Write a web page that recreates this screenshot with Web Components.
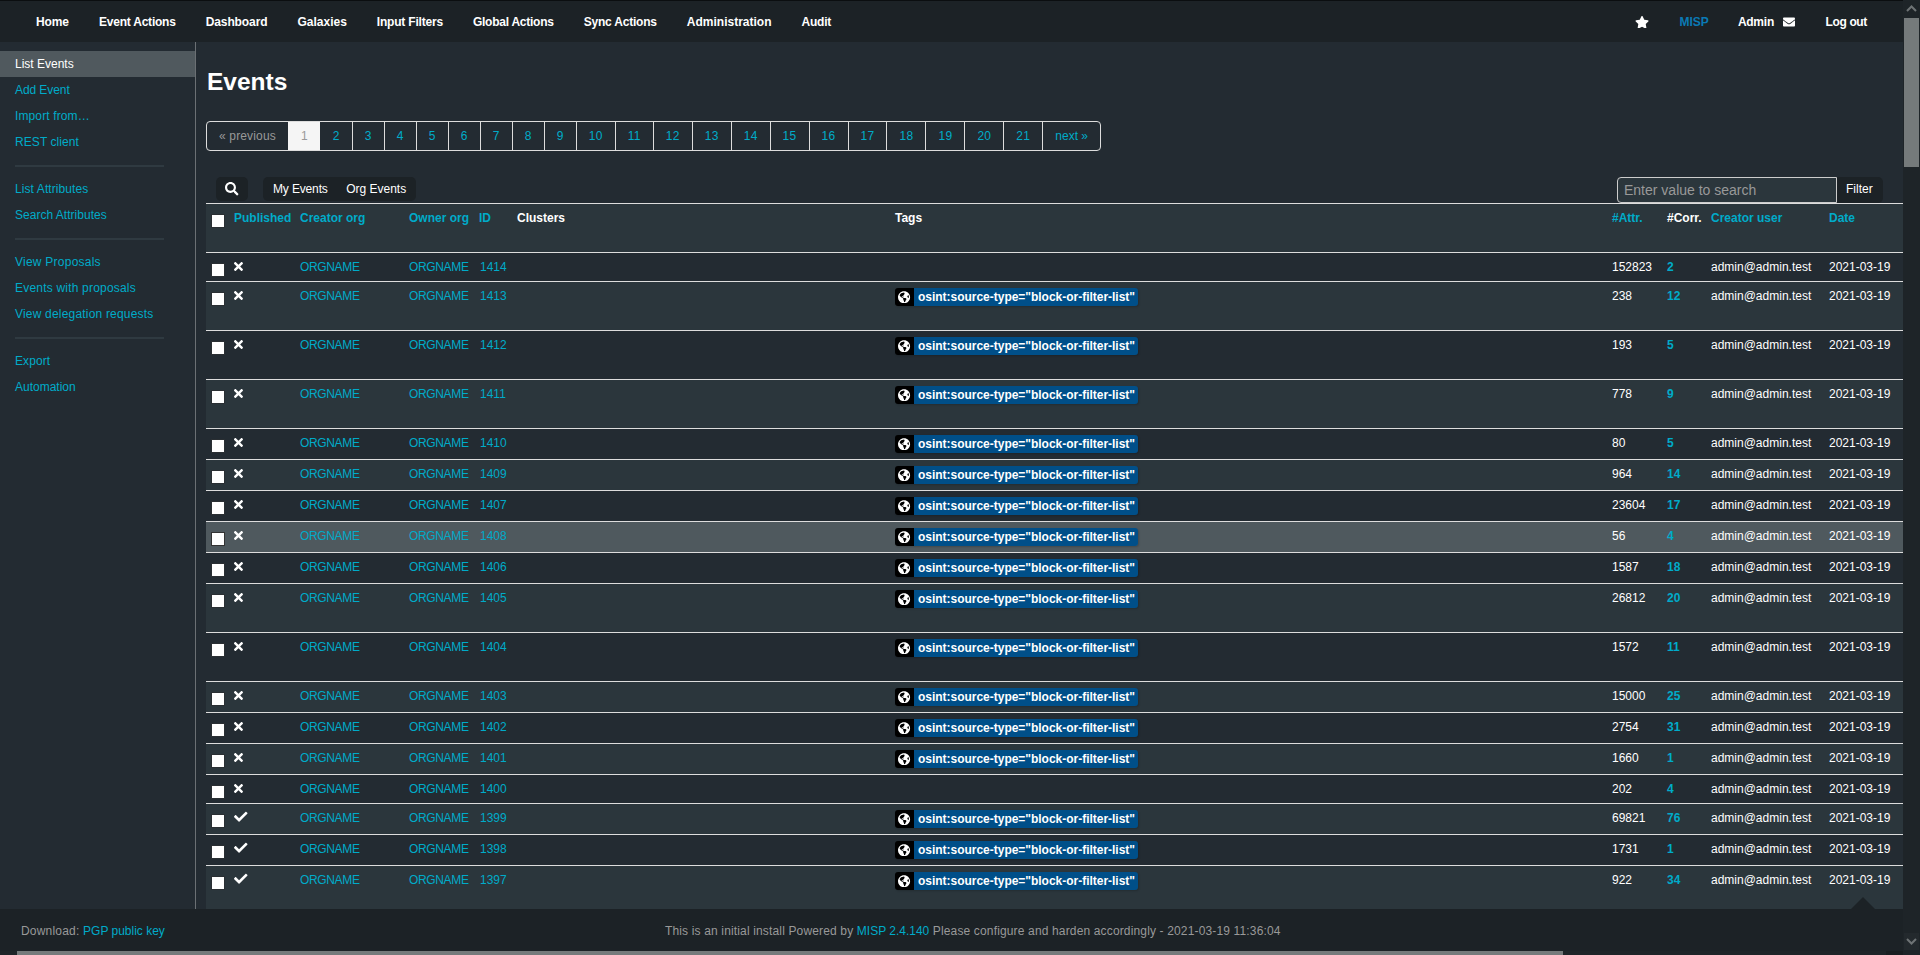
<!DOCTYPE html>
<html lang="en">
<head>
<meta charset="utf-8">
<title>Events</title>
<style>
html,body{margin:0;height:955px;overflow:hidden;background:#232b32}
body{font:12px/20px "Liberation Sans",Arial,sans-serif;color:#fff}
</style>
</head>
<body>
<misp-app>
  <misp-navbar slot="nav"></misp-navbar>
  <misp-sidebar slot="side"></misp-sidebar>
  <misp-heading>Events</misp-heading>
  <misp-pagination pages="21"></misp-pagination>
  <misp-toolbar></misp-toolbar>
  <misp-event-row head></misp-event-row>
  <misp-event-row eid="1414" attrs="152823" corr="2" notag></misp-event-row>
  <misp-event-row eid="1413" attrs="238" corr="12" tall></misp-event-row>
  <misp-event-row eid="1412" attrs="193" corr="5" tall></misp-event-row>
  <misp-event-row eid="1411" attrs="778" corr="9" tall></misp-event-row>
  <misp-event-row eid="1410" attrs="80" corr="5"></misp-event-row>
  <misp-event-row eid="1409" attrs="964" corr="14"></misp-event-row>
  <misp-event-row eid="1407" attrs="23604" corr="17"></misp-event-row>
  <misp-event-row eid="1408" attrs="56" corr="4" hover></misp-event-row>
  <misp-event-row eid="1406" attrs="1587" corr="18"></misp-event-row>
  <misp-event-row eid="1405" attrs="26812" corr="20" tall></misp-event-row>
  <misp-event-row eid="1404" attrs="1572" corr="11" tall></misp-event-row>
  <misp-event-row eid="1403" attrs="15000" corr="25"></misp-event-row>
  <misp-event-row eid="1402" attrs="2754" corr="31"></misp-event-row>
  <misp-event-row eid="1401" attrs="1660" corr="1"></misp-event-row>
  <misp-event-row eid="1400" attrs="202" corr="4" notag></misp-event-row>
  <misp-event-row eid="1399" attrs="69821" corr="76" published></misp-event-row>
  <misp-event-row eid="1398" attrs="1731" corr="1" published></misp-event-row>
  <misp-event-row eid="1397" attrs="922" corr="34" published tall></misp-event-row>
  <misp-footer slot="foot"></misp-footer>
</misp-app>
<script>
const ICONS = {
  times:[352,512,'M242.72 256l100.07-100.07c12.28-12.28 12.28-32.19 0-44.48l-22.24-22.24c-12.28-12.28-32.19-12.28-44.48 0L176 189.28 75.93 89.21c-12.28-12.28-32.19-12.28-44.48 0L9.21 111.45c-12.28 12.28-12.28 32.19 0 44.48L109.28 256 9.21 356.07c-12.28 12.28-12.28 32.19 0 44.48l22.24 22.24c12.28 12.28 32.2 12.28 44.48 0L176 322.72l100.07 100.07c12.28 12.28 32.2 12.28 44.48 0l22.24-22.24c12.28-12.28 12.28-32.19 0-44.48L242.72 256z'],
  check:[512,512,'M173.898 439.404l-166.4-166.4c-9.997-9.997-9.997-26.206 0-36.204l36.203-36.204c9.997-9.998 26.207-9.998 36.204 0L192 312.69 432.095 72.596c9.997-9.997 26.207-9.997 36.204 0l36.203 36.204c9.997 9.997 9.997 26.206 0 36.204l-294.4 294.401c-9.998 9.997-26.207 9.997-36.204-.001z'],
  search:[512,512,'M505 442.7L405.3 343c-4.5-4.5-10.6-7-17-7H372c27.6-35.3 44-79.7 44-128C416 93.1 322.9 0 208 0S0 93.1 0 208s93.1 208 208 208c48.3 0 92.7-16.4 128-44v16.3c0 6.4 2.5 12.5 7 17l99.7 99.7c9.4 9.4 24.6 9.4 33.9 0l28.3-28.3c9.4-9.4 9.4-24.6.1-34zM208 336c-70.7 0-128-57.2-128-128 0-70.7 57.2-128 128-128 70.7 0 128 57.2 128 128 0 70.7-57.2 128-128 128z'],
  star:[576,512,'M259.3 17.8L194 150.2 47.9 171.5c-26.2 3.8-36.7 36.1-17.7 54.6l105.7 103-25 145.5c-4.5 26.3 23.2 46 46.4 33.7L288 439.6l130.7 68.7c23.2 12.2 50.9-7.4 46.4-33.7l-25-145.5 105.7-103c19-18.5 8.5-50.8-17.7-54.6L382 150.2 316.7 17.8c-11.7-23.6-45.6-23.9-57.4 0z'],
  envelope:[512,512,'M502.3 190.8c3.9-3.1 9.7-.2 9.7 4.7V400c0 26.5-21.5 48-48 48H48c-26.5 0-48-21.5-48-48V195.6c0-5 5.7-7.8 9.7-4.7 22.4 17.4 52.1 39.5 154.1 113.6 21.1 15.4 56.7 47.8 92.2 47.6 35.7.3 72-32.8 92.3-47.6 102-74.1 131.6-96.3 154-113.7zM256 320c23.2.4 56.6-29.2 73.4-41.4 132.7-96.3 142.8-104.7 173.4-128.7 5.8-4.5 9.2-11.5 9.2-18.9v-19c0-26.5-21.5-48-48-48H48C21.5 64 0 85.5 0 112v19c0 7.4 3.4 14.3 9.2 18.9 30.6 23.9 40.7 32.4 173.4 128.7 16.8 12.2 50.2 41.8 73.4 41.4z'],
  globe:[496,512,'M248 8C111.03 8 0 119.03 0 256s111.03 248 248 248 248-111.03 248-248S384.97 8 248 8zm82.29 357.6c-3.9 3.88-7.99 7.95-11.31 11.28-2.99 3-5.1 6.7-6.17 10.71-1.51 5.66-2.73 11.38-4.77 16.87l-17.39 46.85c-13.76 3-28 4.69-42.65 4.69v-27.38c1.69-12.62-7.64-36.26-22.63-51.25-6-6-9.37-14.14-9.37-22.63v-32.01c0-11.64-6.27-22.34-16.46-27.97-14.37-7.95-34.81-19.06-48.81-26.11-11.48-5.78-22.1-13.14-31.65-21.75l-.8-.72a114.792 114.792 0 0 1-18.06-20.74c-9.38-13.77-24.66-36.42-34.59-51.14 20.47-45.5 57.36-82.04 103.2-101.89l24.01 12.01C203.48 89.74 216 82.01 216 70.11v-11.3c7.99-1.29 16.12-2.11 24.39-2.42l28.3 28.3c6.25 6.25 6.25 16.38 0 22.63L264 112l-10.34 10.34c-3.12 3.12-3.12 8.19 0 11.31l4.69 4.69c3.12 3.12 3.12 8.19 0 11.31l-8 8a8.008 8.008 0 0 1-5.66 2.34h-8.99c-2.08 0-4.08.81-5.58 2.27l-9.92 9.65a8.008 8.008 0 0 0-1.58 9.31l15.59 31.19c2.66 5.32-1.21 11.58-7.15 11.58h-5.64c-1.93 0-3.79-.7-5.24-1.96l-9.28-8.06a16.017 16.017 0 0 0-15.55-3.1l-31.17 10.39a11.95 11.95 0 0 0-8.17 11.34c0 4.53 2.56 8.66 6.61 10.69l11.08 5.54c9.41 4.71 19.79 7.16 30.31 7.16s22.59 27.29 32 32h66.75c8.49 0 16.62 3.37 22.63 9.37l13.69 13.69a30.503 30.503 0 0 1 8.93 21.57 46.536 46.536 0 0 1-13.72 32.98zM417 274.25c-5.79-1.45-10.84-5-14.15-9.97l-17.98-26.97a23.97 23.97 0 0 1 0-26.62l19.59-29.38c2.32-3.47 5.5-6.29 9.24-8.15l12.98-6.49C440.2 193.59 448 223.87 448 256c0 8.67-.74 17.16-1.82 25.54L417 274.25z']
};
function icon(name,h,extra=''){
  const [w,vh,d]=ICONS[name];
  return `<svg part="icon" width="${(w/vh*h).toFixed(2)}" height="${h}" viewBox="0 0 ${w} ${vh}" style="display:block;${extra}" aria-hidden="true"><path fill="currentColor" d="${d}"/></svg>`;
}
class Base extends HTMLElement{
  constructor(){super();this.attachShadow({mode:'open'});}
  connectedCallback(){this.shadowRoot.innerHTML=this.render();}
}
const LINK='#00abc9';

customElements.define('misp-app',class extends Base{
  render(){return `<style>
    :host{display:grid;grid-template-columns:1903px 17px;grid-template-rows:951px 4px;width:1920px;height:955px;overflow:hidden}
    .page{display:flex;flex-direction:column;min-height:0;min-width:0;overflow:hidden}
    .mid{flex:1;display:flex;min-height:0;overflow:hidden}
    main{flex:1;min-width:0;padding-left:10px;overflow:hidden}
    .vbar{grid-row:1 / 3;grid-column:2;background:#1e2428;display:flex;flex-direction:column;align-items:stretch}
    .arrow{height:17px;display:flex;align-items:center;justify-content:center;color:#6e7375;flex:none}
    .arrow.up{background:#1e2428}
    .arrow.down{background:#23292d;margin:auto 1px 5px}
    .vthumb{height:149px;margin:1px 1px 0;background:#757a7b;flex:none}
    .hbar{background:#1e2428;display:flex;padding-left:17px}
    .hthumb{width:1546px;background:#757a7b}
    .hend{width:17px;margin-left:auto;background:#191e21}
  </style>
  <div class="page">
    <slot name="nav"></slot>
    <div class="mid"><slot name="side"></slot><main><slot></slot></main></div>
    <slot name="foot"></slot>
  </div>
  <div class="vbar">
    <div class="arrow up"><svg width="11" height="7" viewBox="0 0 11 7"><path d="M1 6l4.5-4.5L10 6" fill="none" stroke="currentColor" stroke-width="2"/></svg></div>
    <div class="vthumb"></div>
    <div class="arrow down"><svg width="11" height="7" viewBox="0 0 11 7"><path d="M1 1l4.5 4.5L10 1" fill="none" stroke="currentColor" stroke-width="2"/></svg></div>
  </div>
  <div class="hbar"><div class="hthumb"></div><div class="hend"></div></div>`;}
});

customElements.define('misp-navbar',class extends Base{
  render(){
    const left=[['Home',-.1],['Event Actions',-.22],['Dashboard',-.1],['Galaxies',0],['Input Filters',-.2],['Global Actions',-.25],['Sync Actions',-.2],['Administration',0],['Audit',-.2]];
    return `<style>
    :host{display:flex;height:41px;flex:none;background:#1c2226;border-top:1px solid #0b0e10;justify-content:space-between;padding:0 21px;font-weight:700;font-size:12px;color:#fff}
    nav{display:flex}
    a{padding:1px 15px 0;color:inherit;text-decoration:none;display:flex;align-items:center;gap:9.5px}
    .misp{color:#0a7ab5;padding-right:14px}
    .admin span{letter-spacing:-.25px}
  </style>
  <nav>${left.map(([t,l])=>`<a style="letter-spacing:${l}px">${t}</a>`).join('')}</nav>
  <nav><a>${icon('star',12.5)}</a><a class="misp">MISP</a><a class="admin"><span>Admin</span>${icon('envelope',12)}</a><a style="letter-spacing:-.35px">Log out</a></nav>`;}
});

customElements.define('misp-sidebar',class extends Base{
  render(){
    const groups=[[['List Events',0],['Add Event',-.08],['Import from…',.12],['REST client',.08]],[['List Attributes',.09],['Search Attributes',.02]],[['View Proposals',.24],['Events with proposals',.2],['View delegation requests',.19]],[['Export',.08],['Automation',0]]];
    return `<style>
    :host{display:block;width:195px;flex:none;border-right:1px solid #6b7074;padding-top:9px;font-size:12px;line-height:26px}
    a{display:block;height:26px;padding-left:15px;color:${LINK}}
    a.active{background:#50595e;color:#fff}
    hr{border:0;height:2px;background:#2f3a41;margin:10px 15px 9px 15px;width:149px}
  </style>
  ${groups.map(g=>g.map(([t,l])=>`<a class="${t==='List Events'?'active':''}" style="letter-spacing:${l}px">${t}</a>`).join('')).join('<hr>')}`;}
});

customElements.define('misp-heading',class extends Base{
  render(){return `<style>
    :host{display:block;font-size:24.5px;font-weight:700;line-height:40px;height:40px;padding-top:20px;margin-bottom:19px;color:#fff;padding-left:1px}
  </style><slot></slot>`;}
});

customElements.define('misp-pagination',class extends Base{
  render(){
    const n=+this.getAttribute('pages');
    let h=`<a class="off first">« previous</a><a class="cur">1</a>`;
    for(let i=2;i<=n;i++)h+=`<a>${i}</a>`;
    h+=`<a class="last">next »</a>`;
    return `<style>
    :host{display:inline-flex;vertical-align:top;height:30px;box-sizing:border-box;border:1px solid #ddd;border-radius:4px;font-size:12px;line-height:28px;color:${LINK};margin-bottom:26px}
    a{padding:0 12px;border-left:1px solid #ddd;letter-spacing:.3px}
    a.first{border-left:0;letter-spacing:.15px}
    a.last{letter-spacing:0}
    a.off{color:#999}
    a.cur{background:#f5f5f5;color:#999;border-left-color:#f5f5f5}
    a.cur + a{border-left-color:transparent}
  </style>${h}`;}
});

customElements.define('misp-toolbar',class extends Base{
  render(){return `<style>
    :host{display:flex;height:26px;align-items:flex-start;color:#fff;font-size:12px;line-height:24px;box-sizing:border-box}
    .btn{background:#1c2226;border-radius:5px;height:24px}
    .search{width:32px;margin-left:10px;display:flex;align-items:center;justify-content:center}
    .tabs{margin-left:15px;width:153px;display:flex;padding-left:10px;box-sizing:border-box;gap:18.5px}
    .my{letter-spacing:-.15px}
    .right{margin-left:auto;display:flex;margin-right:20px}
    input{width:220px;height:26px;box-sizing:border-box;border:1px solid #ccc;border-radius:4px 0 0 4px;background:#2b363c;color:#fff;font:14px "Liberation Sans",Arial,sans-serif;padding:0 6px;outline:0}
    input::placeholder{color:#999;opacity:1}
    .filter{width:46px;border-radius:0 5px 5px 0;padding-left:9px;box-sizing:border-box;height:26px}
  </style>
  <div class="btn search">${icon('search',13.5)}</div>
  <div class="btn tabs"><span class="my">My Events</span><span>Org Events</span></div>
  <div class="right"><input placeholder="Enter value to search"><div class="btn filter">Filter</div></div>`;}
});

let rowIndex=0;
customElements.define('misp-event-row',class extends Base{
  render(){
    const a=n=>this.getAttribute(n), has=n=>this.hasAttribute(n);
    const head=has('head');
    const idx=rowIndex++;
    const bg=has('hover')?'#4f595e':(idx%2===0?'#2b363c':'#232b32');
    const h=head||has('tall')?49:has('notag')?29:31;
    const css=`<style>
    :host{display:grid;grid-template-columns:28px 66px 109px 70px 38px 378px 717px 55px 44px 118px 74px;height:${h}px;box-sizing:border-box;border-top:1px solid #ddd;background:${bg};font-size:12px;line-height:20px;color:#fff;overflow:hidden}
    .c{padding-top:4px;white-space:nowrap}
    .box{width:12px;height:12px;background:#fff;margin:11px 0 0 6px;box-shadow:0 0 0 1px ${has('hover')?'#333':'#2a2f33'}}
    .l{color:${LINK}}
    .b{font-weight:700}
    .org{letter-spacing:-.35px}
    .id{padding-left:1px}
    .mark{padding-top:${has('published')?6:7}px}
    .tag{display:flex;width:fit-content;height:18px;margin-top:6px;line-height:18px;border-radius:3px;overflow:hidden;font-weight:700;box-shadow:1px 1px 2px rgba(0,0,0,.18)}
    .g{background:#000;width:19px;display:flex;align-items:center;justify-content:center}
    .t{background:#004f89;padding:0 3px 0 4px;letter-spacing:-.02px}
  </style>`;
    if(head){
      const H=[['Published',1],['Creator org',1],['Owner org',1],['ID',1],['Clusters',0],['Tags',0],['#Attr.',1],['#Corr.',0],['Creator user',1],['Date',1]];
      return css+`<div><div class="box"></div></div>`+H.map(([t,l])=>`<div class="c b ${l?'l':''}">${t}</div>`).join('');
    }
    return css+`<div><div class="box"></div></div>
      <div class="mark">${icon(has('published')?'check':'times',has('published')?13.5:13)}</div>
      <div class="c l org">ORGNAME</div><div class="c l org">ORGNAME</div><div class="c l id">${a('eid')}</div><div class="c"></div>
      <div>${has('notag')?'':`<div class="tag"><span class="g">${icon('globe',12.5)}</span><span class="t">osint:source-type="block-or-filter-list"</span></div>`}</div>
      <div class="c">${a('attrs')}</div><div class="c b l">${a('corr')}</div><div class="c">admin@admin.test</div><div class="c">2021-03-19</div>`;
  }
});

customElements.define('misp-footer',class extends Base{
  render(){return `<style>
    :host{display:flex;position:relative;height:42px;flex:none;background:#1c2226;color:#999;font-size:12px;line-height:44px;padding-left:21px;box-sizing:border-box}
    a{color:${LINK}}
    .d{width:644px}
    .d span{letter-spacing:.2px}
    .c span{letter-spacing:.15px}
    .caret{position:absolute;right:28px;top:-12px;width:0;height:0;border:12px solid transparent;border-top:0;border-bottom-color:#1c2226}
  </style>
  <div class="d"><span>Download: </span><a>PGP public key</a></div>
  <div class="c"><span>This is an initial install Powered by </span><a>MISP 2.4.140</a><span> Please configure and harden accordingly - 2021-03-19 11:36:04</span></div>
  <div class="caret"></div>`;}
});
</script>
</body>
</html>
